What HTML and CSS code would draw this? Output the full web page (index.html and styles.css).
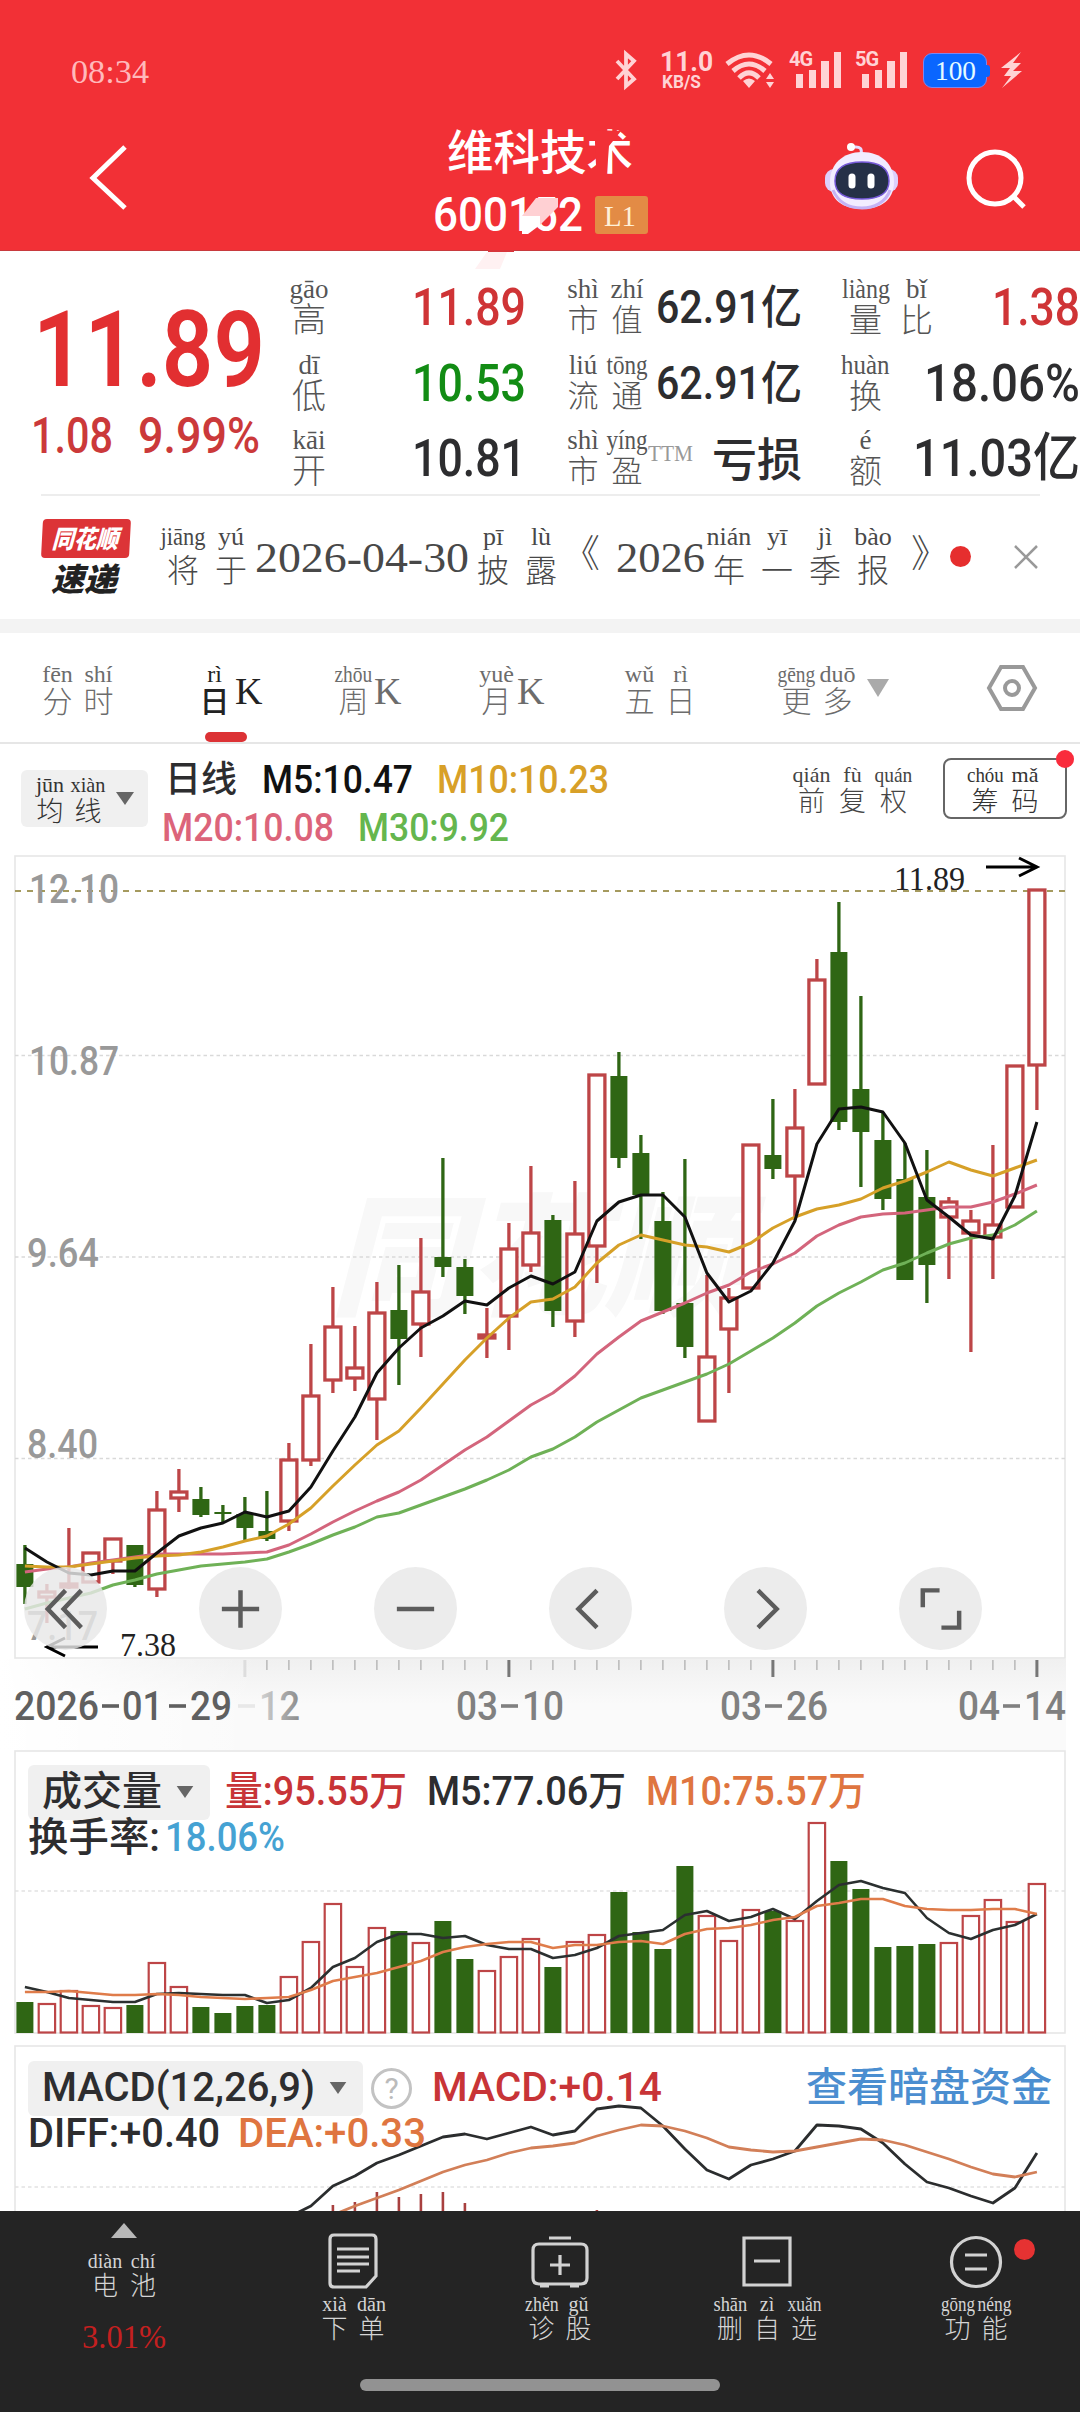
FILE: index.html
```html
<!DOCTYPE html>
<html lang="zh-CN">
<head>
<meta charset="utf-8">
<title>维科技术 600152</title>
<link rel="stylesheet" href="styles.css">
</head>
<body>
<header class="top">
  <div class="status">
    <span class="clock" data-w="78">08:34</span>
    <div class="tray">
      <svg class="bt" width="22" height="36" viewBox="0 0 22 36"><path d="M2 9l17 18-8 7V2l8 7L2 27"/></svg>
      <div class="speed"><span data-w="47">11.0</span><small data-w="44">KB/S</small></div>
      <svg class="wifi" width="50" height="37" viewBox="0 0 50 37"><g fill="none" stroke="#ffd3d5" stroke-width="5"><path d="M2 12Q24-6 46 12"/><path d="M8 19Q24 5 40 19"/><path d="M14 26Q24 16 34 26"/></g><path fill="#ffd3d5" d="M24 36l-6-7q6-5 12 0zM45 21l4 6h-8zM45 36l4-6h-8z"/></svg>
      <div class="cell"><b>4G</b><svg width="46" height="36" viewBox="0 0 46 36"><path d="M0 22h7v14H0zM13 18h7v18h-7zM25 9h8v27h-8zM38 0h7v36h-7z"/></svg></div>
      <div class="cell five"><b>5G</b><svg width="46" height="36" viewBox="0 0 46 36"><path d="M0 22h7v14H0zM13 18h7v18h-7zM25 9h8v27h-8zM38 0h7v36h-7z"/></svg></div>
      <span class="battery"><span data-w="41">100</span></span>
      <svg class="bolt" width="24" height="36" viewBox="0 0 24 36"><path d="M21 0L1 16h9l-6 8h7L2 36l20-17h-9l8-8h-8z"/></svg>
    </div>
  </div>
  <div class="nav">
    <svg class="back" width="40" height="66" viewBox="0 0 40 66"><path d="M35 2L3 33l32 30"/></svg>
    <div class="title">
      <h1 data-w="186">维科技术</h1>
      <div class="code"><span data-w="150">600152</span><em><span data-w="32">L1</span></em></div>
      <svg class="shards" width="220" height="150" viewBox="0 0 220 150"><path fill="#f23036" d="M162 9l26 1-12 15-2 27-11-8-1-22z"/><path fill="#ffd0d3" d="M103 77h22v9l-18 18-18-9z"/><path fill="#fff" d="M89 95h18v9l-12 9h-6z"/><path fill="#fff1f2" d="M54 131h20l-7 17H42z"/><path fill="#d8363b" d="M55 129h26v2H55z"/></svg>
    </div>
    <div class="tools">
      <svg width="74" height="68" viewBox="0 0 74 68"><path d="M36 12Q38 4 29 5" fill="none" stroke="#e5dcff" stroke-width="3" stroke-linecap="round"/><circle cx="26" cy="5" r="4" fill="#fff"/><rect x="0" y="27" width="73" height="23" rx="9" fill="#ddd0fb"/><path fill="#f2ecff" d="M37 10C56 10 69 22 69 40S56 67 37 67 5 58 5 40 18 10 37 10z"/><path d="M8 48C14 62 26 66 37 66s24-5 28-18" fill="none" stroke="#c5b3f5" stroke-width="3"/><path d="M37 20c17 0 27 6 27 19S54 57 37 57 10 52 10 39s10-19 27-19z" fill="#253047" stroke="#7659d8" stroke-width="1.500"/><path stroke="#fff" stroke-width="7" stroke-linecap="round" d="M27 35v8M46 35v8"/></svg>
      <svg width="64" height="62" viewBox="0 0 64 62"><circle cx="29" cy="29" r="26" fill="none" stroke="#fff" stroke-width="5"/><path d="M47 47l11 11" stroke="#fff" stroke-width="5"/></svg>
    </div>
  </div>
</header>

<section class="quote">
  <div class="last">
    <strong data-w="232">11.89</strong>
    <div><span data-w="82">1.08</span><span data-w="122">9.99%</span></div>
  </div>
  <dl class="col a">
    <div><dt class="py"><span class="c"><i>gāo</i>高</span></dt><dd class="up" data-w="114">11.89</dd></div>
    <div><dt class="py"><span class="c"><i>dī</i>低</span></dt><dd class="down" data-w="114">10.53</dd></div>
    <div><dt class="py"><span class="c"><i>kāi</i>开</span></dt><dd data-w="114">10.81</dd></div>
  </dl>
  <dl class="col b">
    <div><dt class="py"><span class="c"><i>shì</i>市</span><span class="c"><i>zhí</i>值</span></dt><dd data-w="146">62.91亿</dd></div>
    <div><dt class="py"><span class="c"><i>liú</i>流</span><span class="c"><i>tōng</i>通</span></dt><dd data-w="146">62.91亿</dd></div>
    <div><dt class="py"><span class="c"><i>shì</i>市</span><span class="c"><i>yíng</i>盈</span><sup data-w="45">TTM</sup></dt><dd data-w="90">亏损</dd></div>
  </dl>
  <dl class="col d">
    <div><dt class="py"><span class="c"><i>liàng</i>量</span><span class="c"><i>bǐ</i>比</span></dt><dd class="up" data-w="88">1.38</dd></div>
    <div><dt class="py"><span class="c"><i>huàn</i>换</span></dt><dd data-w="156">18.06%</dd></div>
    <div><dt class="py"><span class="c"><i>é</i>额</span></dt><dd data-w="167">11.03亿</dd></div>
  </dl>
</section>

<section class="news">
  <div class="brand"><b><span data-w="68">同花顺</span></b><strong data-w="66">速递</strong></div>
  <p class="py">
    <span class="c"><i>jiāng</i>将</span><span class="c"><i>yú</i>于</span><span class="num" data-w="214">2026-04-30</span><span class="c"><i>pī</i>披</span><span class="c"><i>lù</i>露</span><span class="q l">《</span><span class="num" data-w="89">2026</span><span class="c"><i>nián</i>年</span><span class="c"><i>yī</i>一</span><span class="c"><i>jì</i>季</span><span class="c"><i>bào</i>报</span><span class="q r">》</span>
  </p>
  <span class="dot"></span>
  <svg class="close" width="24" height="24" viewBox="0 0 24 24"><path d="M1 1l22 22M23 1L1 23"/></svg>
</section>

<nav class="tabs">
  <a class="py"><span class="c"><i>fēn</i>分</span><span class="c"><i>shí</i>时</span></a>
  <a class="py on"><span class="c"><i>rì</i>日</span><span class="k">K</span></a>
  <a class="py"><span class="c"><i>zhōu</i>周</span><span class="k">K</span></a>
  <a class="py"><span class="c"><i>yuè</i>月</span><span class="k">K</span></a>
  <a class="py"><span class="c"><i>wǔ</i>五</span><span class="c"><i>rì</i>日</span></a>
  <a class="py"><span class="c"><i>gēng</i>更</span><span class="c"><i>duō</i>多</span></a>
  <svg class="tri" width="22" height="18" viewBox="0 0 22 18"><path d="M0 0h22L11 18z"/></svg>
  <svg class="hex" width="50" height="46" viewBox="0 0 50 46"><path d="M14 2h22l12 21-12 21H14L2 23z"/><circle cx="25" cy="23" r="7"/></svg>
</nav>

<section class="averages">
  <button class="pick py"><span class="c"><i>jūn</i>均</span><span class="c"><i>xiàn</i>线</span><svg width="18" height="13" viewBox="0 0 18 13"><path d="M0 0h18L9 13z"/></svg></button>
  <div class="legend">
    <div><span class="cn" data-w="72">日线</span><span class="m5" data-w="151">M5:10.47</span><span class="m10" data-w="172">M10:10.23</span></div>
    <div><span class="m20" data-w="172">M20:10.08</span><span class="m30" data-w="151">M30:9.92</span></div>
  </div>
  <div class="adj py"><span class="c"><i>qián</i>前</span><span class="c"><i>fù</i>复</span><span class="c"><i>quán</i>权</span></div>
  <div class="chips py"><span class="c"><i>chóu</i>筹</span><span class="c"><i>mǎ</i>码</span><em></em></div>
</section>

<section class="price">
  <svg id="price" width="1080" height="804" viewBox="0 855 1080 804"></svg>
  <div class="controls">
    <button><svg viewBox="0 0 44 44"><path d="M22 2L3 22l19 20M39 2L20 22l19 20"/></svg></button>
    <button><svg viewBox="0 0 44 44"><path d="M22 2v40M2 22h40"/></svg></button>
    <button><svg viewBox="0 0 44 44"><path d="M2 22h40"/></svg></button>
    <button><svg viewBox="0 0 44 44"><path d="M29 2L9 22l20 20"/></svg></button>
    <button><svg viewBox="0 0 44 44"><path d="M14 2l20 20-20 20"/></svg></button>
    <button><svg viewBox="0 0 44 44"><path d="M3 20V2h18M42 24v18H23"/></svg></button>
  </div>
</section>
<section class="axis"><svg id="axis" width="1080" height="91" viewBox="0 1659 1080 91"></svg></section>

<section class="panel volume">
  <svg id="volume" class="plot" width="1080" height="284" viewBox="0 1750 1080 284"></svg>
  <div class="row first">
    <button class="pick"><span data-w="120">成交量</span><svg width="18" height="12" viewBox="0 0 18 13"><path d="M0 0h18L9 13z"/></svg></button>
    <span class="v0" data-w="182">量:95.55万</span><span class="v5" data-w="199">M5:77.06万</span><span class="v10" data-w="220">M10:75.57万</span>
  </div>
  <div class="row second"><span data-w="132">换手率:</span><span class="rate" data-w="120">18.06%</span></div>
</section>

<section class="panel macd">
  <svg id="macd" class="plot" width="1080" height="166" viewBox="0 2045 1080 166"></svg>
  <div class="row first">
    <button class="pick"><span data-w="273">MACD(12,26,9)</span><svg width="18" height="12" viewBox="0 0 18 13"><path d="M0 0h18L9 13z"/></svg></button>
    <span class="help">?</span><span class="v0" data-w="230">MACD:+0.14</span>
    <a class="link" data-w="246">查看暗盘资金</a>
  </div>
  <div class="row second"><span data-w="192">DIFF:+0.40</span><span class="dea" data-w="188">DEA:+0.33</span></div>
</section>

<footer class="bar">
  <div class="item ticker"><svg width="26" height="15" viewBox="0 0 26 15"><path d="M13 0l13 15H0z" fill="#b8b8b8"/></svg><span class="py"><span class="c"><i>diàn</i>电</span><span class="c"><i>chí</i>池</span></span><span class="pct" data-w="84">3.01%</span></div>
  <div class="item"><svg width="50" height="56" viewBox="0 0 50 56"><path d="M6 2h38q4 0 4 4v37L38 54H6q-4 0-4-4V6q0-4 4-4zM9 16h32M9 24h32M9 31h32M9 38h23"/></svg><span class="py"><span class="c"><i>xià</i>下</span><span class="c"><i>dān</i>单</span></span></div>
  <div class="item"><svg width="58" height="56" viewBox="0 0 58 56"><path d="M8 11h42q6 0 6 6v28q0 6-6 6H8q-6 0-6-6V17q0-6 6-6zM18 5h22M9 53h9M39 53h9M29 22v20M19 32h20"/></svg><span class="py"><span class="c"><i>zhěn</i>诊</span><span class="c"><i>gǔ</i>股</span></span></div>
  <div class="item"><svg width="50" height="56" viewBox="0 0 50 56"><path d="M2 5h46v47H2zM12 28h26"/></svg><span class="py"><span class="c"><i>shān</i>删</span><span class="c"><i>zì</i>自</span><span class="c"><i>xuǎn</i>选</span></span></div>
  <div class="item"><svg width="54" height="56" viewBox="0 0 54 56"><circle cx="27" cy="29" r="24.500"/><path d="M16 22h22M16 36h22"/></svg><span class="py"><span class="c"><i>gōng</i>功</span><span class="c"><i>néng</i>能</span></span><em></em></div>
  <div class="home"></div>
</footer>
<script src="chart.js"></script>
</body>
</html>
```
FILE: styles.css
```css
* { box-sizing: border-box; margin: 0; padding: 0; }
body { width: 1080px; height: 2412px; overflow: hidden; background: #fff; color: #2d2d2f; font: 500 40px/1 Roboto, "Noto Sans CJK SC", sans-serif; }
button { border: 0; background: none; font: inherit; color: inherit; }
svg { display: block; flex: none; overflow: visible; }
em, i { font-style: normal; }
[data-w] { display: inline-block; white-space: nowrap; transform-origin: 0 50%; flex: none; }

/* characters with pinyin above */
.py { display: flex; font-family: "Liberation Serif", "Noto Sans CJK SC", serif; font-weight: 300; color: #555; }
.c { width: var(--col); display: flex; flex-direction: column; align-items: center; font-size: var(--han); line-height: var(--hl); flex: none; white-space: nowrap; }
.c i { font-size: var(--pin); line-height: var(--pl); margin-bottom: var(--gap, 4px); }

.top { height: 251px; background: #f23036; color: #fff; padding-top: 50px; border-bottom: 1px solid #c83a3e; }
.status { height: 40px; display: flex; justify-content: space-between; align-items: center; padding: 0 56px 0 71px; }
.clock { font: 300 33px/46px "Liberation Serif", serif; color: #ffb9bb; padding-top: 4px; }
.tray { display: flex; align-items: center; color: #ffd3d5; }
.bt path { fill: none; stroke: #ffd3d5; stroke-width: 3.8; }
.speed { display: flex; flex-direction: column; width: 48px; margin: 0 17px 0 23px; font-weight: 700; }
.speed span { font-size: 27px; line-height: 22px; }
.speed small { font-size: 18px; line-height: 17px; margin-left: 2px; }
.cell { position: relative; padding-left: 7px; margin-left: 14px; }
.cell.five { margin-left: 13px; }
.cell b { position: absolute; left: 0; top: -1px; font-size: 20px; line-height: 16px; letter-spacing: -1px; }
.cell path, .bolt path { fill: #ffd3d5; }
.battery { position: relative; width: 64px; height: 35px; margin: 0 13px 0 15px; border: 1px solid #7e86ee; border-radius: 9px; background: #0a66ff; color: #e4fbff; font: 27px/34px "Liberation Serif", serif; padding-left: 11px; }
.battery::after { content: ""; position: absolute; right: -4px; top: 11px; width: 4px; height: 12px; border-radius: 0 3px 3px 0; background: #0a66ff; }
.nav { height: 160px; display: grid; grid-template-columns: 1fr 216px 1fr; padding-top: 29px; }
.back { margin: 26px 0 0 90px; }
.back path { fill: none; stroke: #fff; stroke-width: 5; }
.title { position: relative; display: flex; flex-direction: column; align-items: center; }
.title h1 { font-size: 47px; line-height: 64px; font-weight: 500; padding-top: 2px; }
.code { display: flex; align-items: center; font-size: 48px; line-height: 60px; margin-top: 0; gap: 12px; }
.code em { width: 53px; height: 38px; border-radius: 3px; background: #e38b45; font: 29px/40px "Liberation Serif", serif; padding-left: 9px; color: #fff0d8; }
.shards { position: absolute; left: 1px; top: 2px; }
.tools { display: flex; gap: 67px; padding: 23px 0 0 177px; }
.tools svg + svg { margin-top: 7px; }

.quote { height: 245px; padding-top: 24px; display: grid; grid-template-columns: 284px 280px 276px 240px; position: relative; }
.quote::after { content: ""; position: absolute; left: 41px; right: 40px; bottom: 0; height: 2px; background: #ededed; }
.last { color: #e22f31; padding: 15px 0 0 33px; }
.last strong { font-size: 106px; line-height: 120px; font-weight: 600; }
.last div { font-size: 50px; line-height: 56px; color: #cb393a; margin: -2px 0 0 -2px; display: flex; gap: 25px; }
.col { --han: 34px; --hl: 28px; --pin: 27px; --pl: 28px; --col: 50px; display: grid; grid-auto-rows: 56px; row-gap: 19.500px; }
.col > div { display: flex; justify-content: space-between; }
.col dd { font-size: 52px; line-height: 66px; }
.col.a { padding-right: 38px; }
.col.b { --col: 44px; --han: 31px; padding-right: 38px; margin-left: -3px; }
.col.b dd { font-size: 46px; line-height: 65px; }
.col.b > div:last-child dd { line-height: 68px; }
.col.d { --col: 51px; --han: 33px; }
.col sup { font-size: 24px; line-height: 54px; color: #999; vertical-align: top; margin-left: -1px; }
.col .up { color: #cf3436; }
.col .down { color: #128c14; }

.news { height: 123px; display: flex; align-items: center; padding-left: 42px; --col: 48px; --han: 32px; --hl: 30px; --pin: 26px; --pl: 28px; --gap: 5px; }
.brand { width: 88px; padding-top: 1px; }
.brand b { display: block; height: 39px; border-radius: 4px; background: #dc3437; color: #fff; font: italic 900 25px/36px "Noto Sans CJK SC", sans-serif; padding-left: 10px; transform: skewX(-3deg); }
.brand strong { font: italic 900 32px/36px "Noto Sans CJK SC", sans-serif; margin-left: 9px; color: #222; }
.news .py { margin-left: 29px; color: #484848; }
.num { font-size: 43px; line-height: 70px; }
.q { font-size: 38px; line-height: 62px; width: 51px; }
.q.l { text-indent: -3px; }
.q.r { width: 56px; text-indent: 14px; }
.dot { width: 21px; height: 21px; border-radius: 50%; background: #e62e2e; flex: none; margin: -2px 0 0 -3px; }
.close { margin: -2px 0 0 43px; }
.close path { stroke: #999; stroke-width: 2.5; }

.tabs { height: 125px; border-top: 14px solid #f3f3f3; border-bottom: 2px solid #e6e6e6; display: flex; padding: 29px 0 0 37px; --col: 41px; --han: 30px; --hl: 24px; --pin: 24px; --pl: 24px; }
.tabs .py { margin-right: 75px; color: #6c6c6c; }
.tabs .k { width: 27px; font-size: 38px; line-height: 59px; }
.tabs .on { color: #222; font-weight: 500; position: relative; margin-right: 71px; }
.tabs .on::after { content: ""; position: absolute; left: 11px; bottom: 0; width: 42px; height: 10px; border-radius: 5px; background: #dc3235; }
.tabs .py:nth-child(3) { margin-right: 75px; }
.tabs .py:nth-child(6) { margin-right: 9px; }
.tri { margin-top: 17px; }
.tri path { fill: #aaa; }
.hex { margin: 3px 0 0 98px; }
.hex path, .hex circle { fill: none; stroke: #999; stroke-width: 4; }

.averages { height: 111px; display: flex; align-items: flex-start; --col: 38px; --han: 27px; --hl: 24px; --pin: 22px; --pl: 22px; }
.pick { background: #f0f0f0; border-radius: 6px; display: flex; align-items: center; }
.pick path { fill: #666; }
.averages .pick { width: 127px; height: 57px; margin: 26px 0 0 21px; padding-left: 10px; color: #333; }
.averages .pick svg { margin-left: 9px; }
.legend { width: 624px; margin: 12px 0 0 14px; font-size: 39px; line-height: 48px; }
.legend div { display: flex; gap: 24px; }
.legend .cn { font-size: 36px; margin: 0 1px 0 3px; }
.m5 { color: #111; } .m10 { color: #d8a028; } .m20 { color: #dc647a; } .m30 { color: #65b64e; }
.adj { --col: 41px; padding-top: 20px; margin-left: 5px; color: #444; }
.chips { --col: 40px; width: 124px; height: 61px; border: 2px solid #666; border-radius: 8px; margin: 14px 0 0 29px; padding: 4px 0 0 20px; position: relative; color: #333; }
.chips em { position: absolute; right: -9px; top: -10px; width: 18px; height: 18px; border-radius: 50%; background: #f92c3c; }

.price { height: 804px; position: relative; }
.controls { position: absolute; left: 24px; top: 712px; display: flex; gap: 92px; }
.controls button { width: 83px; height: 83px; border-radius: 50%; background: rgba(232, 232, 232, .82); display: grid; place-items: center; }
.controls svg { width: 41px; height: 42px; }
.controls path { fill: none; stroke: #5c5c5c; stroke-width: 4.8; }
.axis { height: 91px; width: 1066px; background: linear-gradient(90deg, #fff 0, #fff0 260px), linear-gradient(#f0f0f0, #fafafa 50%, #fafafa); }
text { font-family: Roboto, sans-serif; font-weight: 500; font-size: 40px; }
text.serif { font-family: "Liberation Serif", serif; font-weight: 400; font-size: 33px; }
text.mark { font: italic 900 132px "Noto Sans CJK SC", sans-serif; }

.panel { position: relative; }
.volume { height: 295px; padding-top: 13px; }
.macd { height: 166px; padding-top: 14px; overflow: hidden; }
.plot { position: absolute; left: 0; top: 0; }
.row { position: relative; display: flex; align-items: center; padding-left: 28px; font-size: 40px; }
.row .pick { height: 55px; padding: 0 16px 0 14px; gap: 14px; }
.row > span, .row > a { line-height: 58px; }
.row .pick span { line-height: 58px; }
.first .v0 { color: #c83437; margin: 0 20px 0 15px; }
.v5 { margin-right: 20px; }
.v10, .dea { color: #df7540; }
.row.second { height: 34px; padding-left: 28px; }
.volume .second { margin-top: 0; gap: 5px; }
.rate { color: #45a2d3; }
.row .help { width: 41px; height: 41px; border: 3px solid #c3c3c3; border-radius: 50%; line-height: 36px; text-align: center; font-size: 30px; font-weight: 400; color: #bbb; margin-left: 8px; }
.macd .second { margin-top: 0; gap: 18px; }
.macd .v0 { margin: 0 144px 0 20px; }
.link { color: #4b8ed0; }

.bar { position: relative; height: 201px; background: #242424; display: grid; grid-template-columns: 248px 210px 204px 210px 208px; --col: 37px; --han: 26px; --hl: 22px; --pin: 20px; --pl: 22px; }
.item { display: flex; flex-direction: column; align-items: center; padding-top: 22px; position: relative; }
.item path, .item circle { fill: none; stroke: #d2d2d2; stroke-width: 3.2; }
.item .py { margin-top: 4px; color: #d5d5d5; }
.ticker { padding-top: 12px; }
.ticker path { fill: #b8b8b8; stroke: none; }
.ticker .py { margin-top: 12px; --col: 38px; }
.item .pct { font: 33px/40px "Liberation Serif", serif; color: #c42020; margin-top: 19px; }
.item em { position: absolute; left: 142px; top: 28px; width: 21px; height: 21px; border-radius: 50%; background: #e63232; }
.home { position: absolute; left: 360px; top: 168px; width: 360px; height: 12px; border-radius: 6px; background: #929292; }
```
FILE: chart.js
```js
const RED = '#bd4547', GREEN = '#2f6614';
const px = i => 24.9 + i * 22;
const byId = id => document.getElementById(id);

// direction, high, body top, body bottom, low
const candles = [
['g',1545,1564,1587,1604],['r',1584,1592,1597,1623],['r',1528,1584,1587,1589],['r',1553,1553,1582,1582],['r',1539,1539,1561,1574],
['g',1545,1545,1585,1587],['r',1491,1510,1589,1597],['r',1469,1492,1498,1512],['g',1487,1499,1515,1517],['g',1505,1512,1514,1523],
['g',1497,1514,1528,1542],['g',1491,1531,1539,1541],['r',1443,1460,1521,1531],['r',1344,1396,1460,1466],['r',1287,1327,1380,1393],
['r',1326,1368,1378,1391],['r',1282,1313,1399,1440],['g',1265,1310,1339,1385],['r',1238,1292,1324,1357],['g',1158,1257,1267,1277],
['g',1259,1267,1296,1314],['r',1308,1335,1338,1358],['r',1223,1249,1316,1350],['r',1166,1233,1265,1272],['g',1215,1220,1311,1327],
['r',1181,1234,1321,1337],['r',1075,1075,1246,1283],['g',1052,1076,1158,1168],['g',1135,1153,1195,1239],['g',1192,1221,1311,1314],
['g',1159,1303,1347,1358],['r',1275,1357,1421,1421],['r',1288,1298,1329,1393],['r',1145,1145,1288,1288],['g',1099,1155,1169,1179],
['r',1089,1128,1176,1220],['r',959,980,1084,1084],['g',902,952,1122,1130],['g',996,1089,1132,1187],['g',1112,1140,1199,1210],
['g',1143,1179,1280,1280],['g',1150,1197,1265,1303],['r',1197,1202,1217,1279],['r',1210,1221,1233,1352],['r',1145,1225,1237,1279],
['r',1066,1066,1207,1207],['r',890,890,1065,1110]];
const ma5 = [1548,1562,1573,1575,1571,1571,1553,1536,1528,1523,1512,1517,1511,1487,1451,1417,1373,1348,1328,1316,1301,1305,1288,1276,1284,1272,1221,1202,1195,1195,1217,1273,1302,1291,1263,1221,1144,1109,1107,1112,1143,1200,1217,1235,1239,1196,1122];
const ma10 = [1566,1567,1567,1564,1561,1558,1556,1555,1552,1547,1541,1536,1524,1508,1486,1465,1445,1431,1408,1384,1360,1338,1318,1302,1299,1287,1263,1245,1235,1240,1245,1247,1252,1243,1228,1217,1209,1205,1199,1188,1181,1172,1162,1170,1176,1168,1160];
const ma20 = [1572,1569,1567,1563,1560,1557,1554,1554,1554,1554,1553,1552,1545,1534,1522,1511,1501,1492,1480,1465,1450,1437,1421,1405,1393,1376,1354,1337,1321,1312,1303,1293,1285,1272,1264,1253,1236,1225,1217,1214,1213,1210,1207,1207,1202,1194,1185];
const ma30 = [1609,1603,1598,1593,1585,1580,1574,1570,1566,1564,1562,1559,1552,1544,1535,1527,1517,1513,1505,1497,1489,1480,1470,1457,1449,1437,1422,1410,1398,1390,1382,1374,1364,1351,1338,1323,1306,1293,1282,1270,1263,1253,1244,1238,1235,1225,1211];
const vol = [2002,2004,1991,2006,2008,2005,1963,1987,2007,2013,2006,2005,1977,1942,1904,1967,1928,1931,1943,1921,1959,1971,1957,1939,1967,1942,1935,1892,1932,1949,1866,1916,1941,1910,1911,1921,1823,1861,1889,1947,1946,1944,1943,1916,1900,1922,1884];
const vol5 = [1987,1992,1998,2000,2002,2002,1994,1993,1994,1995,1995,2003,2000,1988,1967,1958,1942,1934,1934,1938,1936,1945,1949,1949,1958,1955,1948,1936,1933,1930,1915,1911,1921,1917,1909,1919,1901,1885,1881,1888,1893,1918,1933,1939,1930,1925,1914];
const vol10 = [1992,1992,1991,1993,1995,1995,1994,1995,1997,1998,1999,1998,1997,1990,1981,1977,1973,1967,1961,1952,1947,1944,1942,1942,1948,1945,1945,1942,1941,1944,1934,1929,1928,1925,1920,1917,1906,1903,1899,1899,1906,1909,1910,1910,1909,1909,1914];
const diff = [2217,2206,2186,2176,2163,2155,2146,2137,2134,2139,2133,2127,2135,2131,2109,2106,2108,2126,2149,2170,2179,2165,2159,2151,2125,2126,2129,2143,2164,2182,2188,2196,2203,2188,2153];
const dea = [2215,2206,2198,2190,2181,2172,2165,2160,2153,2148,2146,2143,2136,2130,2125,2126,2131,2138,2147,2150,2152,2151,2147,2143,2139,2140,2145,2152,2159,2167,2174,2177,2172];
const hist = { 14: 2205, 15: 2202, 16: 2192, 17: 2197, 18: 2194, 19: 2192, 20: 2203, 26: 2210 };

const line = (ys, color, w = 3, from = 0) =>
  `<polyline fill="none" stroke="${color}" stroke-width="${w}" stroke-linejoin="round" points="${ys.map((y, i) => px(i + from) + ',' + y).join(' ')}"/>`;
const text = (x, y, w, s, color = '#999', cls = '') =>
  `<text class="${cls}" x="${x}" y="${y}" textLength="${w}" lengthAdjust="spacingAndGlyphs" fill="${color}">${s}</text>`;
const grid = (y, color = '#d9d9d9', dash = '3.500 3') =>
  `<path d="M15 ${y}H1065" stroke="${color}" stroke-width="1.300" stroke-dasharray="${dash}"/>`;
const frame = (y, h) => `<rect x="15" y="${y}" width="1050" height="${h}" fill="none" stroke="#e7e7e7" stroke-width="1.600"/>`;

function drawPrice() {
  let s = frame(856, 802) + text(330, 1305, 412, '同花顺', '#f8f8f8', 'mark');
  s += grid(1055.5) + grid(1257) + grid(1458.5) + `<path d="M15 891H1065" stroke="#a59a5e" stroke-width="2" stroke-dasharray="6 6"/>`;
  s += text(29, 903, 90, '12.10') + text(29, 1075, 90, '10.87') + text(27, 1267, 72, '9.64') + text(27, 1458, 71, '8.40') + text(27, 1640, 71, '7.17');
  candles.forEach(([d, hi, top, bot, lo], i) => {
    const x = px(i), c = d === 'g' ? GREEN : RED;
    s += `<path d="M${x} ${hi}V${top}M${x} ${bot}V${lo}" stroke="${c}" stroke-width="3.300"/>`;
    s += d === 'g'
      ? `<rect x="${x - 8.5}" y="${top}" width="17" height="${bot - top}" fill="${GREEN}"/>`
      : `<rect x="${x - 8}" y="${top}" width="16" height="${bot - top}" fill="#fff" stroke="${RED}" stroke-width="3.300"/>`;
  });
  s += line(ma30, '#6fb157') + line(ma20, '#d3657c') + line(ma10, '#d6a028') + line(ma5, '#111');
  s += text(894, 890, 71, '11.89', '#222', 'serif') + text(120, 1656, 56, '7.38', '#222', 'serif');
  s += '<path d="M986 867H1036M1019 858l18 9-18 9M98 1647H47M65 1638l-18 9 18 9" fill="none" stroke="#000" stroke-width="3"/>';
  byId('price').innerHTML = s;
}

function drawAxis() {
  let s = '<defs><linearGradient id="fade"><stop offset="0" stop-color="#d4d4d4"/><stop offset="1" stop-color="#8c8c8c"/></linearGradient></defs>';
  for (let i = 10; i < 47; i++) {
    const big = i % 12 === 10;
    s += `<path d="M${px(i)} 1660v${big ? 17 : 10}" stroke="${i === 10 ? '#ddd' : big ? '#777' : '#aaa'}" stroke-width="${big ? 3 : 1.2}"/>`;
  }
  // hyphens are drawn as wide bars between the digit groups
  const dash = (x, c) => `<path d="M${x} 1706h17" stroke="${c}" stroke-width="3.600"/>`;
  s += text(14, 1720, 85, '2026', '#606060') + dash(102, '#606060') + text(122, 1720, 41, '01', '#606060') + dash(169, '#606060') + text(190, 1720, 42, '29', '#606060');
  s += dash(238, '#e8e8e8') + text(259, 1720, 41, '12', 'url(#fade)');
  [[456, '03', '10'], [720, '03', '26'], [958, '04', '14']].forEach(([x, m, d]) => {
    s += text(x, 1720, 42, m, '#808080') + dash(x + 45, '#808080') + text(x + 66, 1720, 42, d, '#808080');
  });
  byId('axis').innerHTML = s;
}

function drawVolume() {
  let s = frame(1751, 282) + grid(1891, '#e2e2e2');
  candles.forEach(([d], i) => {
    s += d === 'g'
      ? `<rect x="${px(i) - 8.5}" y="${vol[i]}" width="17" height="${2033 - vol[i]}" fill="${GREEN}"/>`
      : `<rect x="${px(i) - 8.2}" y="${vol[i]}" width="16.400" height="${2032.5 - vol[i]}" fill="#fff" stroke="${RED}" stroke-width="2.200"/>`;
  });
  byId('volume').innerHTML = s + line(vol5, '#2b3030', 2.6) + line(vol10, '#df7c4a', 2.6);
}

function drawMacd() {
  let s = frame(2046, 200) + grid(2187, '#e2e2e2');
  for (const i in hist) s += `<path d="M${px(+i)} ${hist[i]}V2212" stroke="#a8403f" stroke-width="2.600"/>`;
  byId('macd').innerHTML = s + line(diff, '#2b2d2e', 2.8, 12) + line(dea, '#d27f58', 2.8, 14);
}

// condense each label to its design width
function fitLabels() {
  document.querySelectorAll('[data-w]').forEach(el => {
    const w = +el.dataset.w, natural = el.getBoundingClientRect().width;
    el.style.transform = `scaleX(${w / natural})`;
    el.style.marginRight = `${parseFloat(getComputedStyle(el).marginRight) + w - natural}px`;
  });
  document.querySelectorAll('.c i').forEach(el => {
    const max = el.parentElement.clientWidth - 3, natural = el.offsetWidth;
    if (natural > max) el.style.transform = `scaleX(${max / natural})`;
  });
}

drawPrice();
drawAxis();
drawVolume();
drawMacd();
fitLabels();
```
